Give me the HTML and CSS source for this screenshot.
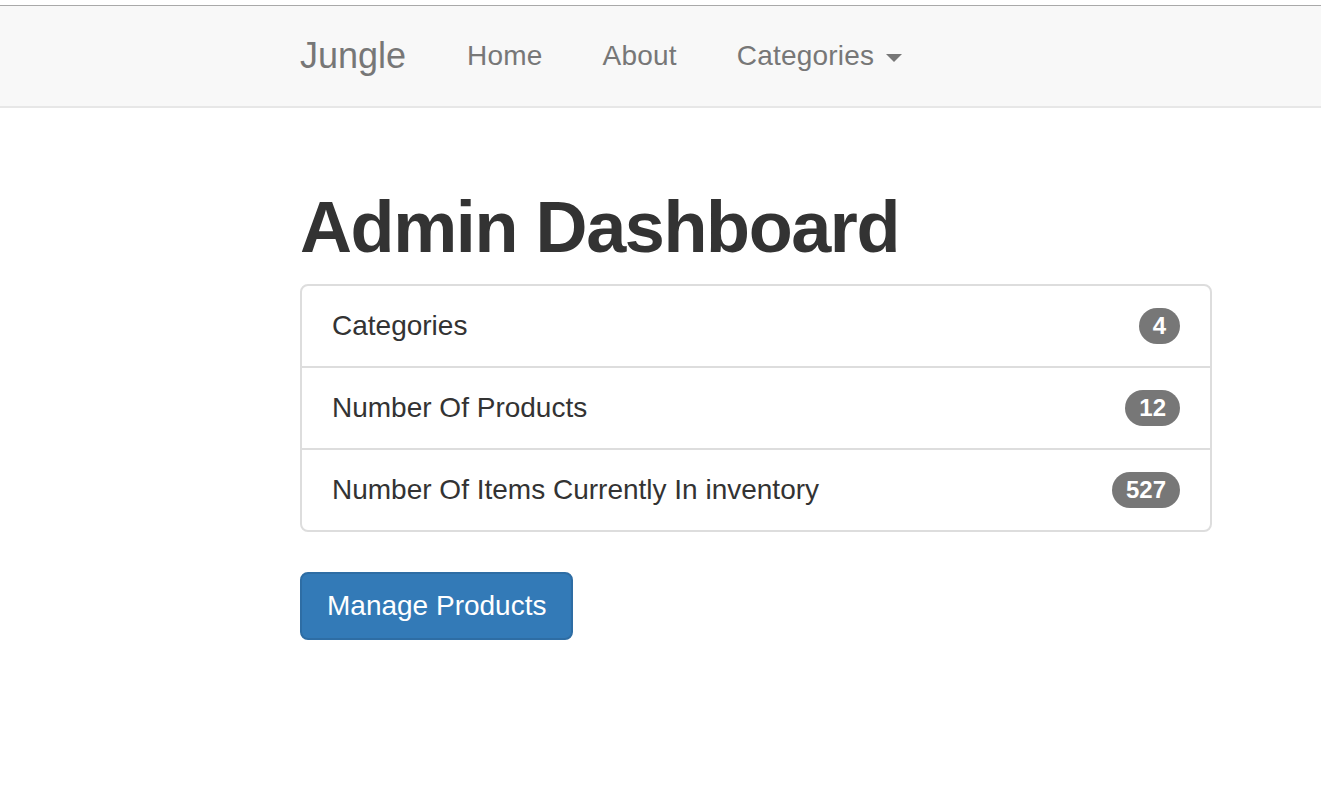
FILE: index.html
```html
<!DOCTYPE html>
<html lang="en">
<head>
<meta charset="utf-8">
<title>Jungle - Admin Dashboard</title>
<link rel="stylesheet" href="styles.css">
</head>
<body>
<nav class="navbar">
  <div class="container nav-inner">
    <a class="brand" href="#">Jungle</a>
    <ul class="nav-links">
      <li><a href="#">Home</a></li>
      <li><a href="#">About</a></li>
      <li><a href="#">Categories <span class="caret"></span></a></li>
    </ul>
  </div>
</nav>
<main class="container main">
  <h1 class="title">Admin Dashboard</h1>
  <ul class="list-group">
    <li class="list-item"><span>Categories</span><span class="badge">4</span></li>
    <li class="list-item"><span>Number Of Products</span><span class="badge">12</span></li>
    <li class="list-item"><span>Number Of Items Currently In inventory</span><span class="badge">527</span></li>
  </ul>
  <a class="btn" href="#">Manage Products</a>
</main>
</body>
</html>
```
FILE: styles.css
```css
* { box-sizing: border-box; }
html, body { margin: 0; padding: 0; background: #fff; }
body {
  font-family: "Liberation Sans", Arial, Helvetica, sans-serif;
  color: #333;
  font-size: 28px;
  line-height: 40px;
}
a { text-decoration: none; }

.container {
  width: 912px;
  margin-left: 300px;
}
.main {
  display: flow-root;
}

.navbar {
  margin-top: 5px;
  background: #f8f8f8;
  border-top: 1px solid #a9a9a9;
  border-bottom: 2px solid #e7e7e7;
  margin-bottom: 40px;
}
.nav-inner {
  display: flex;
  align-items: center;
  height: 100px;
}
.brand {
  font-size: 36px;
  line-height: 40px;
  color: #777;
  padding-right: 31px;
}
.nav-links {
  display: flex;
  list-style: none;
  margin: 0;
  padding: 0;
}
.nav-links a {
  display: block;
  padding: 0 30px;
  color: #777;
  font-size: 28px;
  line-height: 40px;
  letter-spacing: 0.2px;
}
.caret {
  display: inline-block;
  width: 0;
  height: 0;
  margin-left: 4px;
  vertical-align: middle;
  border-top: 8px solid #777;
  border-left: 8px solid transparent;
  border-right: 8px solid transparent;
}

.title {
  font-size: 72px;
  font-weight: bold;
  line-height: 79px;
  letter-spacing: -1.4px;
  margin: 40px 0 17px;
  color: #333;
}

.list-group {
  list-style: none;
  margin: 0 0 40px;
  padding: 0;
  border: 2px solid #ddd;
  border-radius: 8px;
}
.list-item {
  display: flex;
  justify-content: space-between;
  align-items: center;
  padding: 20px 30px;
  line-height: 40px;
}
.list-item + .list-item {
  border-top: 2px solid #ddd;
}
.badge {
  display: inline-block;
  min-width: 20px;
  padding: 6px 14px;
  font-size: 24px;
  font-weight: bold;
  line-height: 24px;
  color: #fff;
  text-align: center;
  background: #777;
  border-radius: 20px;
}

.btn {
  display: inline-block;
  padding: 12px 25px;
  font-size: 28px;
  line-height: 40px;
  color: #fff;
  background: #337ab7;
  border: 2px solid #2e6da4;
  border-radius: 8px;
}
```
